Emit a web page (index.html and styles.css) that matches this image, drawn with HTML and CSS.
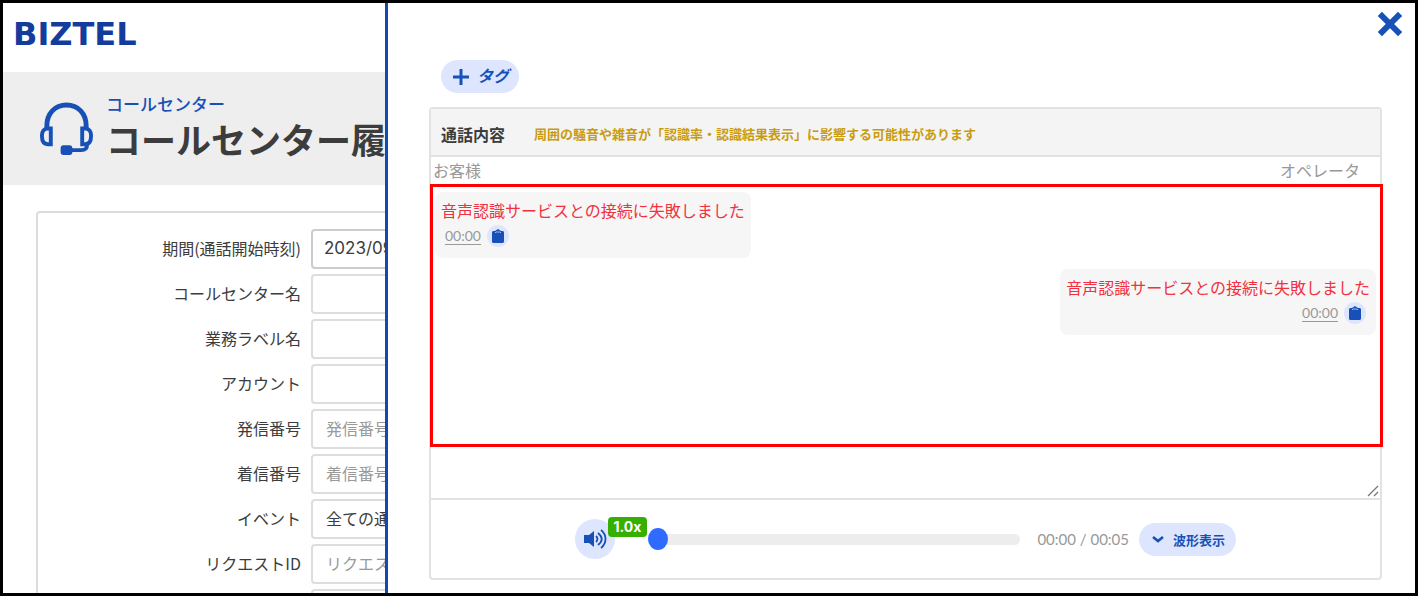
FILE: index.html
```html
<!DOCTYPE html>
<html lang="ja">
<head>
    <meta charset="UTF-8">
    <meta name="viewport" content="width=device-width, initial-scale=1.0">
    <title>コールセンター履歴 | BIZTEL</title>
    <link rel="stylesheet" href="styles.css">
</head>
<body>
    <div class="app">
        <main class="page">
            <header class="site-header">
                <a class="logo" href="#">BIZTEL</a>
            </header>

            <div class="page-title">
                <svg class="headset" viewBox="0 0 54 54" fill="none" stroke="#1751b8" stroke-width="4">
                    <path d="M7 27V24C7 12 15 3 27 3s20 9 20 21v3" stroke-width="5"/>
                    <path d="M11 27v16H8c-4 0-6-3-6-8v-1c0-4 2-7 6-7zM43 27v16h3c4 0 6-3 6-8v-1c0-4-2-7-6-7z"/>
                    <path d="M48 43c0 5-2 6-6 6H30"/>
                    <rect x="23" y="46" width="8" height="6" rx="1" fill="#1751b8"/>
                </svg>
                <div>
                    <p>コールセンター</p>
                    <h1>コールセンター履歴</h1>
                </div>
            </div>

            <form class="search">
                <label for="period">期間(通話開始時刻)</label>
                <input type="text" id="period" class="period" value="2023/09/01">

                <label for="center">コールセンター名</label>
                <input type="text" id="center">

                <label for="business">業務ラベル名</label>
                <input type="text" id="business">

                <label for="account">アカウント</label>
                <input type="text" id="account">

                <label for="caller">発信番号</label>
                <input type="text" id="caller" placeholder="発信番号">

                <label for="callee">着信番号</label>
                <input type="text" id="callee" placeholder="着信番号">

                <label for="event">イベント</label>
                <select id="event">
                    <option>全ての通話</option>
                </select>

                <label for="request">リクエストID</label>
                <input type="text" id="request" placeholder="リクエストID">

                <input type="text" class="field-only" aria-label="メモ">
            </form>
        </main>

        <aside class="drawer">
            <div class="drawer-top">
                <button type="button" class="close" aria-label="閉じる">
                    <svg viewBox="0 0 24 24"><path d="M4 4l16 16M20 4L4 20" stroke="#1751b8" stroke-width="6" stroke-linecap="square"/></svg>
                </button>
            </div>

            <button type="button" class="pill tag">
                <svg viewBox="0 0 16 16"><path d="M8 0v16M0 8h16" stroke="#1751b8" stroke-width="3"/></svg>
                <span>タグ</span>
            </button>

            <section class="card">
                <div class="card-header">
                    <h2>通話内容</h2>
                    <p>周囲の騒音や雑音が「認識率・認識結果表示」に影響する可能性があります</p>
                </div>

                <div class="transcript">
                    <div class="speakers">
                        <span>お客様</span>
                        <span>オペレータ</span>
                    </div>
                    <div class="messages">
                        <div class="message">
                            <p>音声認識サービスとの接続に失敗しました</p>
                            <div class="message-meta">
                                <a href="#">00:00</a>
                                <button type="button" class="copy" aria-label="コピー">
                                    <svg viewBox="0 0 12 14"><path d="M1 2h2l3-2 3 2h2l1 1v10l-1 1H1l-1-1V3z" fill="#1751b8"/><path d="M3 4l1-1h4l1 1" stroke="#9db8ec" fill="none"/></svg>
                                </button>
                            </div>
                        </div>
                        <div class="message operator">
                            <p>音声認識サービスとの接続に失敗しました</p>
                            <div class="message-meta">
                                <a href="#">00:00</a>
                                <button type="button" class="copy" aria-label="コピー">
                                    <svg viewBox="0 0 12 14"><path d="M1 2h2l3-2 3 2h2l1 1v10l-1 1H1l-1-1V3z" fill="#1751b8"/><path d="M3 4l1-1h4l1 1" stroke="#9db8ec" fill="none"/></svg>
                                </button>
                            </div>
                        </div>
                    </div>
                    <svg class="grip" viewBox="0 0 12 12" stroke="#777" stroke-width="1.3"><path d="M1 11L11 1M7 11l4-4"/></svg>
                </div>

                <div class="player">
                    <button type="button" class="volume" aria-label="音量">
                        <svg viewBox="0 0 24 20" fill="none" stroke="#1751b8" stroke-width="1.8">
                            <path d="M1 6h5l5-4v16l-5-4H1z" fill="#1751b8" stroke="none"/>
                            <path d="M13 7c2 2 2 4 0 6M15 4c5 4 5 8 0 12M18 1c6 5 6 13 0 18"/>
                        </svg>
                        <span class="speed">1.0x</span>
                    </button>
                    <input type="range" class="seek" min="0" max="5" value="0" aria-label="再生位置">
                    <span class="time">00:00 / 00:05</span>
                    <button type="button" class="pill wave">
                        <svg viewBox="0 0 12 12"><path d="M1 4l5 4 5-4" fill="none" stroke="#1751b8" stroke-width="2.6"/></svg>
                        波形表示
                    </button>
                </div>
            </section>
        </aside>
    </div>
</body>
</html>
```

FILE: styles.css
```css
* {
    box-sizing: border-box;
}
body {
    margin: 0;
    font-family: "Noto Sans CJK JP", sans-serif;
    font-size: 16px;
    line-height: 24px;
    color: #3c3c3c;
}
h1, h2, p {
    margin: 0;
}
button, input, select {
    font-family: inherit;
    font-size: 16px;
}
button {
    border: none;
    padding: 0;
    cursor: pointer;
}
svg {
    display: block;
}
.app {
    display: grid;
    grid-template-columns: 382px 1fr;
    height: 100vh;
    border: 3px solid #000;
    overflow: hidden;
}

/* Search page behind the drawer */
.page {
    min-width: 0;
    overflow: hidden;
}
.site-header {
    display: flex;
    align-items: center;
    height: 69px;
    padding: 0 10px 8px;
}
.logo {
    font-family: "DejaVu Sans", sans-serif;
    font-size: 32px;
    font-weight: bold;
    color: #143c9c;
    text-decoration: none;
}
.page-title {
    display: flex;
    gap: 13px;
    height: 113px;
    padding: 20px 0 0 37px;
    background: #eee;
    white-space: nowrap;
}
.headset {
    flex: none;
    width: 53px;
    height: 53px;
    margin-top: 10px;
}
.page-title p {
    font-size: 17px;
    font-weight: 500;
    color: #1751b8;
}
.page-title h1 {
    font-size: 35px;
    line-height: 46px;
}
.search {
    display: grid;
    grid-template-columns: 263px 300px;
    grid-auto-rows: 40px;
    gap: 5px 10px;
    width: 700px;
    margin: 26px 0 0 33px;
    padding-top: 16px;
    border: 2px solid #ddd;
    border-radius: 4px;
    align-items: center;
}
.search label {
    padding-bottom: 2px;
    text-align: right;
}
.search input, .search select {
    width: 100%;
    height: 40px;
    padding: 0 13px 2px;
    border: 2px solid #ddd;
    border-radius: 4px;
    background: #fff;
    color: #3c3c3c;
    appearance: none;
}
.search input::placeholder {
    color: #999;
}
.search .period {
    padding: 0 11px 2px;
    border-color: #ccc;
    font-family: Inter, sans-serif;
    font-size: 17px;
}
.search .field-only {
    grid-column: 2;
}

/* Call detail drawer */
.drawer {
    min-width: 0;
    padding-left: 41px;
    padding-right: 33px;
    border-left: 3px solid #1149b5;
    background: #fff;
}
.drawer-top {
    display: flex;
    justify-content: flex-end;
    margin-right: -20px;
    padding-top: 9px;
}
.close {
    width: 24px;
    height: 24px;
    background: none;
}
.pill {
    display: flex;
    align-items: center;
    height: 33px;
    border-radius: 17px;
    background: #dee6ff;
    color: #1751b8;
    font-weight: bold;
}
.tag {
    gap: 8px;
    margin: 24px 0 14px 12px;
    padding: 0 10px 0 12px;
}
.tag svg {
    width: 16px;
    height: 16px;
}
.tag span {
    padding-bottom: 4px;
    font-style: italic;
}
.card {
    border: 2px solid #e2e2e2;
    border-radius: 4px;
}
.card-header {
    display: flex;
    align-items: center;
    gap: 29px;
    height: 48px;
    padding: 3px 10px 0;
    border-bottom: 2px solid #e2e2e2;
    background: #f4f4f4;
}
.card-header h2 {
    font-size: 16px;
}
.card-header p {
    font-size: 13px;
    font-weight: bold;
    color: #c99c10;
}
.transcript {
    position: relative;
    padding-bottom: 51px;
    border-bottom: 2px solid #e2e2e2;
}
.speakers {
    display: flex;
    justify-content: space-between;
    height: 27px;
    padding: 1px 20px 0 2px;
    color: #999;
}
.messages {
    display: flex;
    flex-direction: column;
    align-items: flex-start;
    gap: 11px;
    min-height: 263px;
    margin: 0 -3px 0 -1px;
    padding: 5px 4px 5px 2px;
    border: 3px solid #f00;
}
.message {
    height: 66px;
    padding: 6px;
    border-radius: 8px;
    background: #f6f6f6;
}
.operator {
    align-self: flex-end;
}
.message p {
    color: #f2303f;
}
.message-meta {
    display: flex;
    align-items: center;
    gap: 6px;
    padding: 3px 4px 0;
}
.operator .message-meta {
    justify-content: flex-end;
}
.message-meta a {
    font-family: Lato, sans-serif;
    font-size: 14px;
    line-height: 20px;
    color: #999;
    text-underline-offset: 3px;
}
.copy {
    display: flex;
    align-items: center;
    justify-content: center;
    width: 22px;
    height: 22px;
    border-radius: 50%;
    background: #dee6ff;
}
.copy svg {
    width: 12px;
    height: 14px;
}
.grip {
    position: absolute;
    right: 1px;
    bottom: 1px;
    width: 12px;
    height: 12px;
}
.player {
    display: flex;
    align-items: center;
    height: 78px;
    padding: 0 144px;
}
.volume {
    position: relative;
    flex: none;
    width: 40px;
    height: 40px;
    margin-right: 33px;
    padding-left: 8px;
    border-radius: 50%;
    background: #dee6ff;
}
.volume svg {
    width: 24px;
    height: 20px;
}
.speed {
    position: absolute;
    top: -2px;
    left: 33px;
    width: 39px;
    border-radius: 4px;
    background: #36b000;
    color: #fff;
    font-family: Inter, sans-serif;
    font-size: 14px;
    font-weight: bold;
    line-height: 20px;
}
.seek {
    flex: 1;
    min-width: 0;
    height: 22px;
    margin: 0;
    background: none;
    appearance: none;
}
.seek::-webkit-slider-runnable-track {
    height: 11px;
    border-radius: 6px;
    background: #ededed;
}
.seek::-webkit-slider-thumb {
    width: 20px;
    height: 22px;
    margin-top: -6px;
    border-radius: 50%;
    background: #2f6bff;
    appearance: none;
}
.time {
    margin: 0 10px 0 17px;
    font-family: Lato, sans-serif;
    font-size: 15px;
    color: #999;
    white-space: nowrap;
}
.wave {
    flex: none;
    gap: 9px;
    padding: 0 11px 0 13px;
    font-size: 13px;
}
.wave svg {
    width: 12px;
    height: 12px;
}
```
